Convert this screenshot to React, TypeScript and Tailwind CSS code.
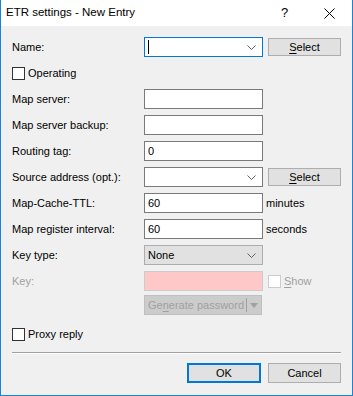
import React from 'react';

const font = { fontFamily: '"Liberation Sans", Arial, sans-serif' };

function Chevron({ color = '#606060' }: { color?: string }) {
  return (
    <svg width="9" height="5" viewBox="0 0 9 5" className="shrink-0">
      <polyline points="0.5,0.5 4.5,4.5 8.5,0.5" fill="none" stroke={color} strokeWidth="1" />
    </svg>
  );
}

function Label({ children, disabled }: { children: React.ReactNode; disabled?: boolean }) {
  return (
    <div className={`w-[132px] shrink-0 whitespace-nowrap ${disabled ? 'text-[#a0a0a0]' : 'text-black'}`}>
      {children}
    </div>
  );
}

function TextBox({ value, focused, combo }: { value?: string; focused?: boolean; combo?: boolean }) {
  return (
    <div
      className={`w-[119px] h-[20px] bg-white border flex items-center pl-[3px] pr-[6px] ${
        focused ? 'border-[#0078d7]' : 'border-[#7a7a7a]'
      }`}
    >
      {focused && <div className="w-px h-[14px] bg-black" />}
      <span className="flex-1 leading-none">{value}</span>
      {combo && <Chevron />}
    </div>
  );
}

function SelectButton() {
  return (
    <button className="ml-[5px] w-[73px] h-[18px] bg-[#e1e1e1] border border-[#adadad] flex items-center justify-center leading-none text-black">
      <span>
        <span className="underline underline-offset-2">S</span>elect
      </span>
    </button>
  );
}

function Checkbox({ label, disabled }: { label: string; disabled?: boolean }) {
  return (
    <div className="flex items-center whitespace-nowrap">
      <div
        className={`w-[13px] h-[13px] bg-white border ${disabled ? 'border-[#cccccc]' : 'border-[#333333]'}`}
      />
      <span className={`ml-[3px] ${disabled ? 'text-[#a0a0a0]' : 'text-black'}`}>
        {label === 'Show' ? (
          <>
            <span className="underline underline-offset-2">S</span>how
          </>
        ) : (
          label
        )}
      </span>
    </div>
  );
}

export default function App() {
  return (
    <div
      className="w-[353px] h-[396px] bg-[#f0f0f0] border-x border-b border-[#1883d7] flex flex-col text-[11px] text-black overflow-hidden"
      style={font}
    >
      {/* Title bar */}
      <div className="h-[26px] shrink-0 bg-white flex items-center pl-[5px]">
        <span className="flex-1 text-[11.5px]">ETR settings - New Entry</span>
        <span className="w-[45px] text-center text-[13px]">?</span>
        <div className="w-[45px] flex justify-center">
          <svg width="11" height="11" viewBox="0 0 11 11">
            <path d="M0.5 0.5 L10.5 10.5 M10.5 0.5 L0.5 10.5" stroke="#000" strokeWidth="1" />
          </svg>
        </div>
      </div>

      {/* Body */}
      <div className="flex-1 flex flex-col pl-[11px] pr-[11px] pt-[8px]">
        <div className="h-[26px] flex items-center">
          <Label>Name:</Label>
          <TextBox focused combo />
          <SelectButton />
        </div>
        <div className="h-[26px] flex items-center">
          <Checkbox label="Operating" />
        </div>
        <div className="h-[26px] flex items-center">
          <Label>Map server:</Label>
          <TextBox />
        </div>
        <div className="h-[26px] flex items-center">
          <Label>Map server backup:</Label>
          <TextBox />
        </div>
        <div className="h-[26px] flex items-center">
          <Label>Routing tag:</Label>
          <TextBox value="0" />
        </div>
        <div className="h-[26px] flex items-center">
          <Label>Source address (opt.):</Label>
          <TextBox combo />
          <SelectButton />
        </div>
        <div className="h-[26px] flex items-center">
          <Label>Map-Cache-TTL:</Label>
          <TextBox value="60" />
          <span className="ml-[3px]">minutes</span>
        </div>
        <div className="h-[26px] flex items-center">
          <Label>Map register interval:</Label>
          <TextBox value="60" />
          <span className="ml-[3px]">seconds</span>
        </div>
        <div className="h-[26px] flex items-center">
          <Label>Key type:</Label>
          <div className="w-[119px] h-[20px] bg-[#e1e1e1] border border-[#adadad] flex items-center pl-[3px] pr-[6px]">
            <span className="flex-1 leading-none">None</span>
            <Chevron />
          </div>
        </div>
        <div className="h-[26px] flex items-center">
          <Label disabled>Key:</Label>
          <div className="w-[119px] h-[20px] bg-[#ffc8c8] border border-[#cccccc]" />
          <div className="ml-[5px]">
            <Checkbox label="Show" disabled />
          </div>
        </div>
        <div className="mt-[1px] h-[20px] flex items-center">
          <div className="w-[132px] shrink-0" />
          <div className="w-[118px] h-[20px] bg-[#cccccc] border border-[#bfbfbf] flex items-center text-[#a0a0a0] whitespace-nowrap">
            <span className="flex-1 pl-[3px] leading-none">
              Ge<span className="underline underline-offset-2">n</span>erate password
            </span>
            <div className="w-px h-[14px] bg-[#a0a0a0]" />
            <div className="w-[14px] flex justify-center">
              <svg width="8" height="5" viewBox="0 0 8 5">
                <polygon points="0,0 8,0 4,5" fill="#a0a0a0" />
              </svg>
            </div>
          </div>
        </div>
        <div className="mt-[13px] h-[13px] flex items-center">
          <Checkbox label="Proxy reply" />
        </div>
        <div className="mt-[11px] h-[2px] border-t border-[#a0a0a0] border-b border-b-white" />
        <div className="mt-[9px] flex justify-end gap-[7px]">
          <button className="w-[74px] h-[20px] bg-[#e1e1e1] border-2 border-[#0078d7] leading-none">OK</button>
          <button className="w-[73px] h-[20px] bg-[#e1e1e1] border border-[#adadad] leading-none">Cancel</button>
        </div>
      </div>
    </div>
  );
}
